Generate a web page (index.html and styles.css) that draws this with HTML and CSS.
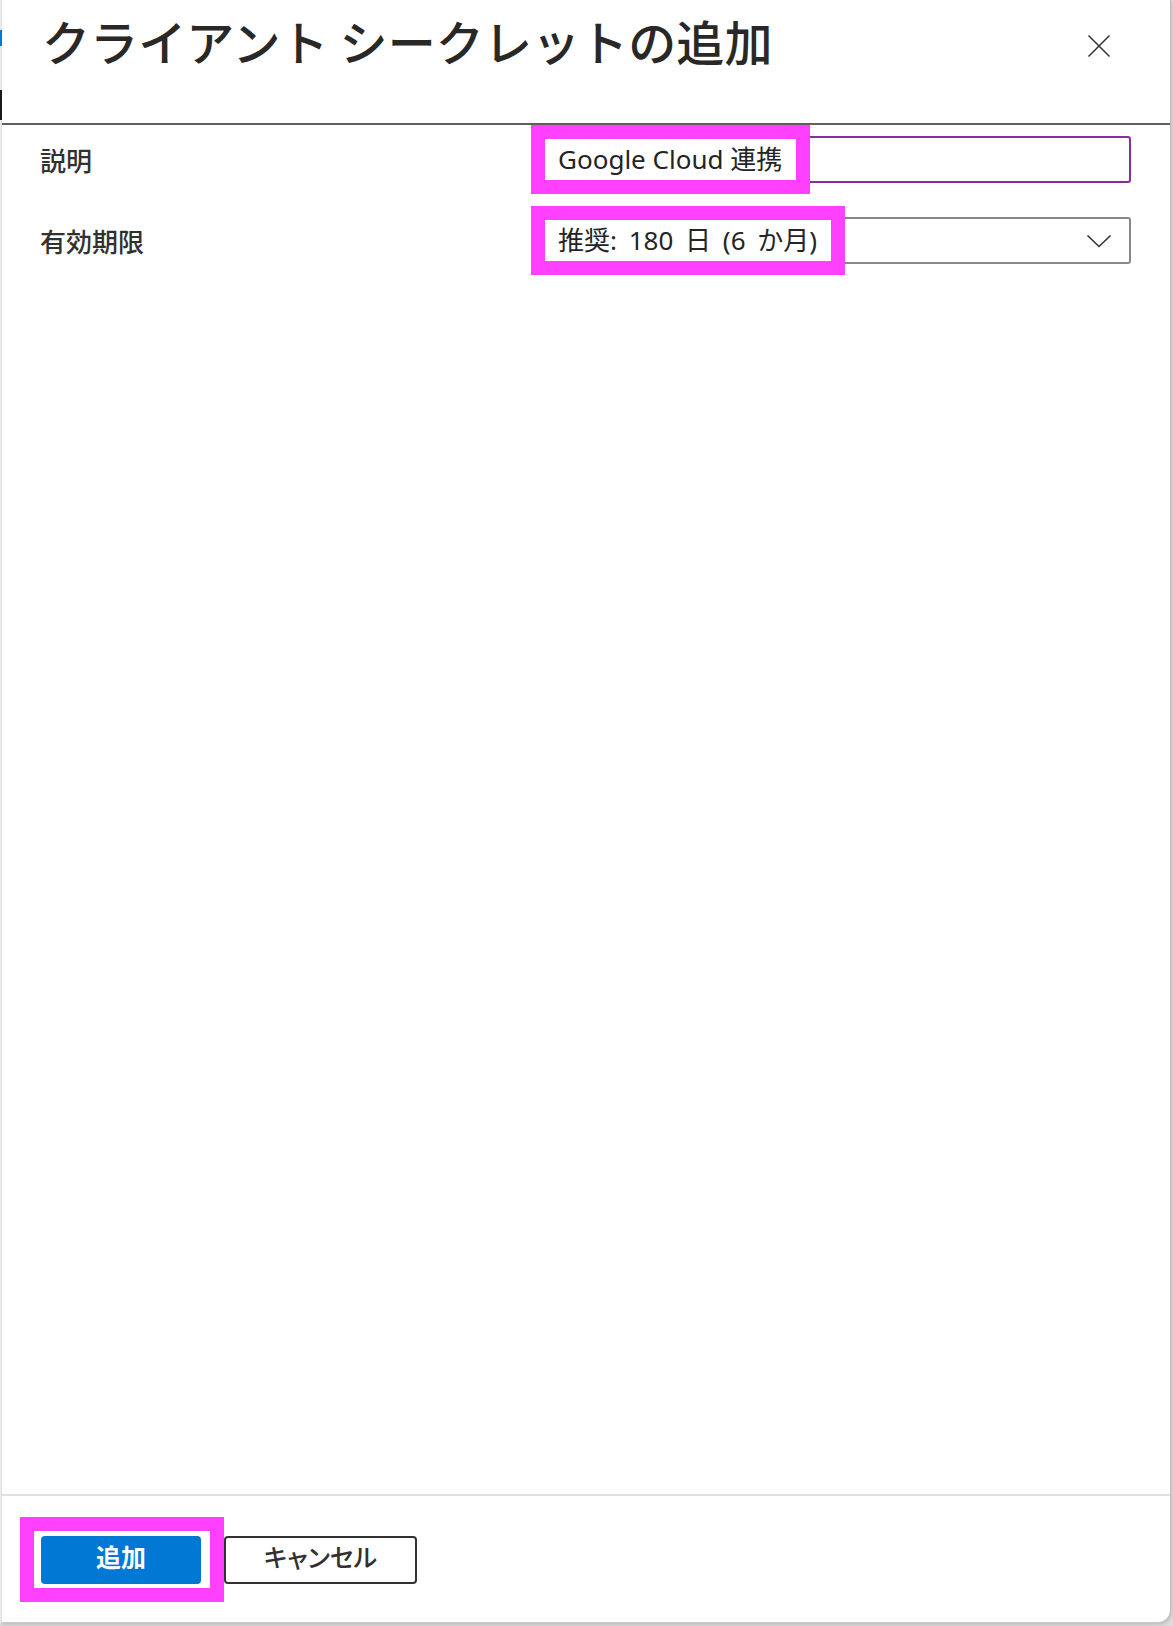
FILE: index.html
```html
<!DOCTYPE html>
<html lang="ja">
<head>
<meta charset="utf-8">
<title>クライアント シークレットの追加</title>
<link rel="stylesheet" href="styles.css">
</head>
<body>
<div class="page">
  <div class="edge-left">
    <span class="edge-mark blue m1"></span>
    <span class="edge-mark dark m2"></span>
  </div>
  <section class="panel">
    <header class="panel-header">
      <h1 class="panel-title">クライアント シークレットの追加</h1>
      <button class="close-btn" aria-label="閉じる">
        <svg width="24" height="24" viewBox="0 0 24 24"><path d="M1.5 1.5 L22.5 22.5 M22.5 1.5 L1.5 22.5" stroke="#323130" stroke-width="1.5" fill="none"/></svg>
      </button>
    </header>
    <div class="form">
      <div class="form-label">説明</div>
      <div class="field field-text">
        <span class="mark">Google Cloud 連携</span>
      </div>
      <div class="form-label">有効期限</div>
      <div class="field field-select">
        <span class="mark mark-wide">推奨: 180 日 (6 か月)</span>
        <svg class="chevron" width="26" height="14" viewBox="0 0 26 14"><path d="M1.5 1.5 L13 12.5 L24.5 1.5" stroke="#323130" stroke-width="1.6" fill="none"/></svg>
      </div>
    </div>
    <div class="spacer"></div>
    <footer class="panel-footer">
      <div class="mark-btn"><button class="btn btn-primary">追加</button></div>
      <button class="btn btn-secondary">キャンセル</button>
    </footer>
  </section>
</div>
</body>
</html>
```
FILE: styles.css
```css
* { box-sizing: border-box; }
html, body { margin: 0; padding: 0; }
body {
  background: #d6d6d6;
  font-family: "Noto Sans", "Noto Sans CJK JP", sans-serif;
  color: #323130;
  width: 1173px;
  height: 1626px;
  overflow: hidden;
}
.page {
  display: flex;
  height: 1626px;
  background: #dcdcdc;
}
.edge-left {
  width: 1px;
  height: 1623px;
  background: #ececec;
  position: relative;
  flex: none;
}
.edge-mark { position: absolute; left: 0; width: 2px; }
.edge-mark.blue { background: #0078d4; }
.edge-mark.dark { background: #1b1a19; }
.m1 { top: 30px; height: 16px; }
.m2 { top: 90px; height: 30px; }

.panel {
  width: 1170px;
  height: 1623px;
  background: #fff;
  border-left: 1px solid #dedede;
  border-right: 1px solid #bdbdbd;
  border-bottom: 1px solid #c8c8c8;
  border-bottom-right-radius: 13px;
  box-shadow: 1px 2px 3px rgba(0,0,0,0.12);
  display: flex;
  flex-direction: column;
  flex: none;
}
.panel-header {
  height: 125px;
  flex: none;
  border-bottom: 2px solid #605e5c;
  display: flex;
  justify-content: space-between;
  align-items: flex-start;
  padding: 16px 48px 0 40px;
}
.panel-title {
  margin: 0;
  font-size: 48px;
  line-height: 48px;
  font-weight: 500;
  color: #292827;
  font-family: "Noto Sans CJK JP", sans-serif;
  letter-spacing: 0.1px;
}
.close-btn {
  width: 46px;
  height: 46px;
  margin-top: 7px;
  border: none;
  background: transparent;
  padding: 0;
  display: flex;
  align-items: center;
  justify-content: center;
}

.form {
  flex: none;
  display: grid;
  grid-template-columns: 500px 1fr;
  grid-auto-rows: 47px;
  row-gap: 34px;
  align-items: center;
  padding: 11px 39px 0 38px;
}
.form-label {
  font-family: "Noto Sans CJK JP", sans-serif;
  font-size: 26px;
  font-weight: 500;
  color: #323130;
  line-height: 30px;
}
.field {
  position: relative;
  height: 47px;
  border-radius: 3px;
  display: flex;
  align-items: center;
  justify-content: flex-end;
  padding-right: 17px;
}
.field-text { border: 2px solid #8a2ba6; }
.field-select { border: 2px solid #8a8886; }
.mark {
  position: absolute;
  left: -11px;
  top: -13px;
  border: 14px solid #ff40ff;
  background: #fff;
  height: 69px;
  padding: 0 14px 0 13px;
  font-size: 26px;
  line-height: 41px;
  color: #242424;
  white-space: nowrap;
}
.mark-wide { word-spacing: 5px; }
.chevron { display: block; }

.spacer { flex: 1; }

.panel-footer {
  flex: none;
  height: 128px;
  border-top: 2px solid #e1dfdd;
  display: flex;
  align-items: flex-start;
  padding: 21px 0 0 18px;
}
.mark-btn {
  border: 14px solid #ff40ff;
  background: #fff;
  padding: 5px 9px 4px 7px;
  display: flex;
}
.btn {
  height: 48px;
  border-radius: 4px;
  font-family: "Noto Sans CJK JP", sans-serif;
  font-size: 25px;
  line-height: 1;
  font-weight: 700;
  padding: 0 0 8px 0;
  display: flex;
  align-items: center;
  justify-content: center;
}
.btn-primary {
  width: 160px;
  background: #0078d4;
  color: #fff;
  border: none;
}
.btn-secondary {
  width: 193px;
  margin-top: 19px;
  background: #fff;
  color: #323130;
  border: 2px solid #323130;
  font-weight: 500;
  font-feature-settings: "palt";
}
```
